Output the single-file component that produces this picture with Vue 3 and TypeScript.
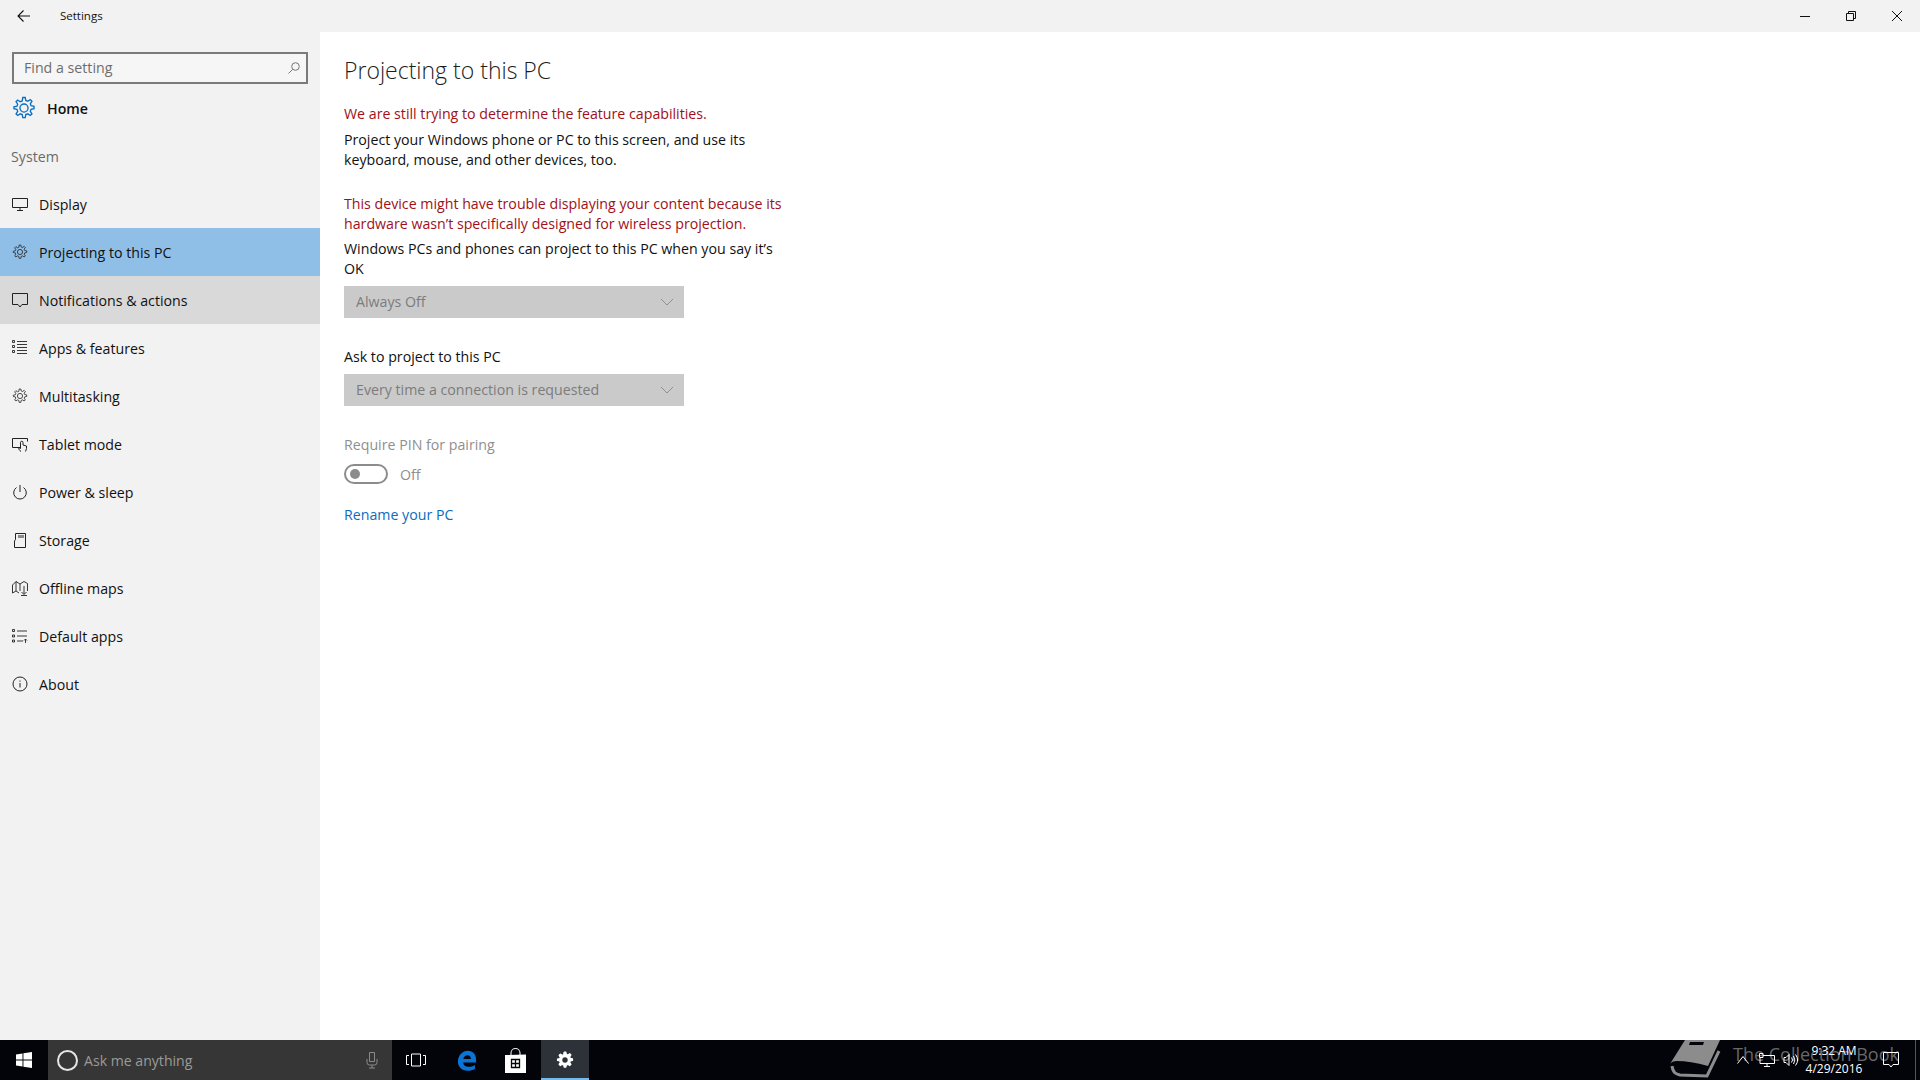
<script setup lang="ts">
interface NavItem { label: string; icon: string; state?: string }
const items: NavItem[] = [
  { label: 'Display', icon: 'display' },
  { label: 'Projecting to this PC', icon: 'gear', state: 'selected' },
  { label: 'Notifications & actions', icon: 'note', state: 'hover' },
  { label: 'Apps & features', icon: 'apps' },
  { label: 'Multitasking', icon: 'gear' },
  { label: 'Tablet mode', icon: 'tablet' },
  { label: 'Power & sleep', icon: 'power' },
  { label: 'Storage', icon: 'storage' },
  { label: 'Offline maps', icon: 'map' },
  { label: 'Default apps', icon: 'defaults' },
  { label: 'About', icon: 'about' },
]
const gear = 'M7.2 1h1.6l.4 2 1.3.5 1.7-1.1 1.1 1.1-1.1 1.7.5 1.3 2 .4v1.6l-2 .4-.5 1.3 1.1 1.7-1.1 1.1-1.7-1.1-1.3.5-.4 2H7.2l-.4-2-1.3-.5-1.7 1.1-1.1-1.1 1.1-1.7-.5-1.3-2-.4V7.200l2-.4.5-1.3-1.1-1.700 1.100-1.100 1.700 1.100 1.300-.5z'
</script>

<template>
  <div class="screen">
    <header class="titlebar">
      <div class="title-left">
        <svg class="back" width="16" height="16" viewBox="0 0 16 16"><path d="M14 8H2M7.500 2.500 2 8l5.500 5.500" fill="none" stroke="#111" stroke-width="1.100" /></svg>
        <span class="app-name">Settings</span>
      </div>
      <div class="win-buttons">
        <svg width="12" height="12" viewBox="0 0 12 12"><path d="M1 6.500h10" stroke="#111" fill="none" /></svg>
        <svg width="12" height="12" viewBox="0 0 12 12"><path d="M1.500 3.500h7v7h-7zM3.500 3.500v-2h7v7h-2" stroke="#111" fill="none" /></svg>
        <svg width="12" height="12" viewBox="0 0 12 12"><path d="M1 1l10 10M11 1 1 11" stroke="#111" fill="none" /></svg>
      </div>
    </header>

    <div class="body">
      <aside class="sidebar">
        <div class="search">
          <span>Find a setting</span>
          <svg width="14" height="14" viewBox="0 0 14 14"><circle cx="8.500" cy="5.500" r="3.800" fill="none" stroke="#777" /><path d="M5.700 8.300 1.500 12.500" stroke="#777" fill="none" /></svg>
        </div>
        <div class="home">
          <svg width="24" height="24" viewBox="0 0 16 16"><path :d="gear" fill="none" stroke="#0a6fc2" stroke-width=".9" /><circle cx="8" cy="8" r="2.700" fill="none" stroke="#0a6fc2" stroke-width=".9" /></svg>
          <span>Home</span>
        </div>
        <div class="group">System</div>
        <nav>
          <div v-for="item in items" :key="item.label" class="nav-row" :class="item.state">
            <svg class="nav-icon" width="16" height="16" viewBox="0 0 16 16" fill="none" stroke="#222" stroke-width="1">
              <template v-if="item.icon === 'display'"><path d="M.500 2.500h15v9H.500zM8 11.500v3M5 14.500h6" /></template>
              <template v-else-if="item.icon === 'gear'"><path :d="gear" stroke-width=".8" /><circle cx="8" cy="8" r="2.600" stroke-width=".8" /></template>
              <template v-else-if="item.icon === 'note'"><path d="M.500 1.500h15v11H10L8 15l-2-2.500H.500z" /></template>
              <template v-else-if="item.icon === 'apps'"><path d="M.500.500h2v2h-2zM.500 5.500h2v2h-2zM.500 10.500h2v2h-2zM5 1.500h10M5 4.500h10M5 7.500h10M5 10.500h10M5 13.500h10" stroke-width=".9" /></template>
              <template v-else-if="item.icon === 'tablet'"><path d="M8 11.500H.500v-9h15v3M9 15.500c-1.500-1-2.500-2.500-2.500-4l2 1V6.500a1.200 1.200 0 0 1 2.500 0V9l3.500 1v2.500l-1 3" /></template>
              <template v-else-if="item.icon === 'power'"><path d="M8 1v7M4.500 3.500a6.300 6.300 0 1 0 7 0" /></template>
              <template v-else-if="item.icon === 'storage'"><path d="M3.500 1.500h10v14h-11V9l1-1.500zM7 3v3M9 3v3M11 3v3" /></template>
              <template v-else-if="item.icon === 'map'"><path d="M.500 13V5L4 1.500 8 4l4-2.500 3.500 2V11M4 1.500V11M8 4v7M.500 13 4 11l3 2M12 6v8M9.500 12l2.500 2.500 2.500-2.500M9 15.500h6" stroke-width=".9" /></template>
              <template v-else-if="item.icon === 'defaults'"><path d="M.500 1.500h2v2h-2zM.500 7h2v2h-2zM.500 12h2v2h-2zM5 3h10M5 8h10M5 13h6M13.500 15v-4M12 12.500l1.500-1.500 1.500 1.500" stroke-width=".9" /></template>
              <template v-else><circle cx="8" cy="8" r="7" /><path d="M8 7v4.500M8 4.500v1.200" /></template>
            </svg>
            <span>{{ item.label }}</span>
          </div>
        </nav>
      </aside>

      <main class="content">
        <h1>Projecting to this PC</h1>
        <p class="red first">We are still trying to determine the feature capabilities.</p>
        <p class="para">Project your Windows phone or PC to this screen, and use its keyboard, mouse, and other devices, too.</p>
        <p class="red second">This device might have trouble displaying your content because its hardware wasn’t specifically designed for wireless projection.</p>
        <p class="para third">Windows PCs and phones can project to this PC when you say it’s OK</p>
        <div class="select tight">
          <span>Always Off</span>
          <svg width="14" height="8" viewBox="0 0 14 8"><path d="M1 1l6 6 6-6" fill="none" stroke="#8f8f8f" /></svg>
        </div>
        <p class="label">Ask to project to this PC</p>
        <div class="select tight">
          <span>Every time a connection is requested</span>
          <svg width="14" height="8" viewBox="0 0 14 8"><path d="M1 1l6 6 6-6" fill="none" stroke="#8f8f8f" /></svg>
        </div>
        <p class="pin">Require PIN for pairing</p>
        <div class="toggle-row">
          <div class="toggle"><i></i></div>
          <span>Off</span>
        </div>
        <a class="rename">Rename your PC</a>
      </main>
    </div>

    <footer class="taskbar">
      <div class="start">
        <svg width="16" height="16" viewBox="0 0 14 14"><path d="M0 2.100 5.700 1.300V6.600H0zM6.500 1.200 14 0V6.600H6.500zM0 7.400H5.700V12.700L0 11.900zM6.500 7.400H14V14L6.500 12.800z" fill="#fff" /></svg>
      </div>
      <div class="cortana">
        <i class="ring"></i>
        <span>Ask me anything</span>
        <svg class="mic" width="12" height="18" viewBox="0 0 12 18"><path d="M3.500 1.500h5v9h-5zM1 8v3.500A2.500 2.500 0 0 0 3.500 14h5a2.500 2.500 0 0 0 2.500-2.500V8M6 14v3M3 17h6" fill="none" stroke="#8a8a8a" /></svg>
      </div>
      <div class="tb-icon">
        <svg width="20" height="14" viewBox="0 0 20 14"><path d="M5.500 1h9v12h-9zM3 2.500H.500v9H3M17 2.500h2.500v9H17" fill="none" stroke="#fff" /></svg>
      </div>
      <div class="tb-icon edge">
        <svg width="20" height="21" viewBox="0 0 20 22"><path d="M19.500 13H6c.3 3 2.500 4.600 5.500 4.600 2.600 0 5-.7 6.800-2v4.200c-2 1.200-4.700 1.900-7.800 1.900C4.500 21.700.500 17.700.500 12.100.500 6 5 .800 11 .800c5.300 0 8.500 3.700 8.500 9.500zM14 9.400c0-2.200-1.100-4-3.400-4-2.200 0-4 1.600-4.500 4z" fill="#0a74d6" /></svg>
      </div>
      <div class="tb-icon">
        <svg width="21" height="25" viewBox="0 0 21 25"><path d="M6 8V5a4.500 4.500 0 0 1 9 0v3" fill="none" stroke="#ddd" stroke-width="1.200" /><path d="M0 7 21 6.500V25H0z" fill="#fff" /><path d="M6.500 11.500h8v8h-8zM10.500 11.500v8M6.500 15.500h8" fill="none" stroke="#02040a" stroke-width="1.300" /></svg>
      </div>
      <div class="tb-icon active">
        <svg width="18" height="18" viewBox="0 0 16 16"><path :d="gear" fill="#fff" stroke="#fff" stroke-width="1" stroke-linejoin="round" /><circle cx="8" cy="8" r="2.400" fill="#2d3238" /></svg>
      </div>
      <div class="tray">
        <div class="watermark">
          <svg width="52" height="40" viewBox="0 0 52 40">
            <path d="M15 0H50L38 26Q20 21 7 21Q2 21 0 24Z" fill="#8c8c8c" />
            <path d="M20 2H34L33 5H19Z" fill="#02040a" />
            <path d="M2 26C3 33 6 34 10 35L37 36L49 11" fill="none" stroke="#8c8c8c" stroke-width="3" />
          </svg>
          <span>The Collection Book</span>
        </div>
        <svg class="tray-a" width="12" height="8" viewBox="0 0 12 8"><path d="M.500 7.500l5.500-7 5.500 7" fill="none" stroke="#fff" /></svg>
        <svg class="tray-b" width="16" height="14" viewBox="0 0 16 14"><path d="M4 2.500h11.500v8H1V5M8 10.500v3M5 13.500h6M.500.500h3.500v4H.500z" fill="none" stroke="#fff" /></svg>
        <svg class="tray-c" width="16" height="12" viewBox="0 0 16 12"><path d="M1 3.500h2L6 .500v11l-3-3H1zM8.500 3.500a4 4 0 0 1 0 5M10.500 2a7 7 0 0 1 0 8M12.500.500a9 9 0 0 1 0 11" fill="none" stroke="#fff" /></svg>
        <div class="clock"><span>9:32 AM</span><span>4/29/2016</span></div>
        <svg class="tray-d" width="16" height="16" viewBox="0 0 16 16"><path d="M.500.500h15v12H10L8 15l-2-2.500H.500z" fill="none" stroke="#fff" /></svg>
        <i class="show-desktop"></i>
      </div>
    </footer>
  </div>
</template>

<style scoped>
.screen {
  width: 1920px;
  height: 1080px;
  display: flex;
  flex-direction: column;
  overflow: hidden;
  font-family: "Open Sans", "Noto Sans", sans-serif;
  color: #111;
  background: #fff;
}
.titlebar {
  height: 32px;
  flex: none;
  display: flex;
  justify-content: space-between;
  align-items: center;
  background: #f2f2f2;
}
.title-left { display: flex; align-items: center; padding-left: 16px; }
.app-name { margin-left: 28px; font-size: 11.500px; padding-bottom: 1px; }
.win-buttons { display: flex; gap: 34px; padding-right: 17px; }
.body { flex: 1; display: flex; min-height: 0; }
.sidebar { width: 320px; flex: none; background: #f2f2f2; padding-top: 20px; }
.search {
  margin: 0 12px;
  height: 32px;
  box-sizing: border-box;
  border: 2px solid #7a7a7a;
  display: flex;
  align-items: center;
  justify-content: space-between;
  padding: 0 5px 2px 10px;
  font-size: 14.200px;
  color: #6d6d6d;
  background: #f6f6f6;
}
.search svg { margin-top: 2px; }
.home { display: flex; align-items: center; gap: 11px; height: 48px; padding-left: 12px; font-size: 14.200px; font-weight: 600; }
.group { height: 48px; line-height: 50px; padding-left: 11px; font-size: 14.200px; color: #6a6a6a; }
.nav-row { height: 48px; display: flex; align-items: center; padding-left: 12px; font-size: 14.200px; }
.nav-icon { margin-right: 11px; flex: none; }
.selected { background: #8fbfe7; }
.hover { background: #d9d9d9; }
.content { flex: 1; padding: 0 0 0 24px; }
h1 { margin: 19px 0 0; font-size: 23px; line-height: 38px; font-weight: 300; color: #1c1c1c; }
p { margin: 0; width: 445px; font-size: 14.200px; line-height: 20px; }
.red { color: #a01018; }
.first { margin-top: 15px; }
.para { margin-top: 6px; }
.second { margin-top: 24px; }
.third { margin-top: 5px; }
.select {
  width: 340px;
  height: 32px;
  padding: 0 10px 2px 12px;
  box-sizing: border-box;
  background: #cacaca;
  display: flex;
  align-items: center;
  justify-content: space-between;
  font-size: 14.200px;
  color: #7c7c7c;
}
.select svg { margin-top: 2px; }
.tight { margin-top: 7px; }
.label { margin-top: 29px; }
.pin { margin-top: 29px; color: #8f8f8f; }
.toggle-row { margin-top: 9px; display: flex; align-items: center; gap: 12px; font-size: 14.200px; color: #8f8f8f; }
.toggle { width: 44px; height: 20px; box-sizing: border-box; border: 2px solid #8c8c8c; border-radius: 10px; display: flex; align-items: center; padding-left: 4px; }
.toggle i { width: 10px; height: 10px; border-radius: 50%; background: #8c8c8c; }
.rename { display: block; margin-top: 21px; line-height: 20px; font-size: 14.200px; color: #0a6cbe; }
.taskbar { height: 40px; flex: none; display: flex; background: #02040a; color: #fff; }
.start { width: 48px; flex: none; display: flex; align-items: center; justify-content: center; }
.cortana { width: 344px; flex: none; background: #363636; display: flex; align-items: center; font-size: 14.100px; color: #9a9a9a; padding-left: 9px; box-sizing: border-box; }
.ring { width: 21px; height: 21px; box-sizing: border-box; border: 2.500px solid #e6e6e6; border-radius: 50%; margin-right: 6px; }
.mic { margin-left: auto; margin-right: 14px; }
.tb-icon { width: 48px; flex: none; display: flex; align-items: center; justify-content: center; box-sizing: border-box; }
.tb-icon.edge { margin-left: 3px; }
.tb-icon.active { background: #2d3238; border-bottom: 2px solid #76b9ed; margin-left: 2px; padding-top: 2px; }
.tray { flex: 1; position: relative; display: flex; align-items: center; justify-content: flex-end; padding-right: 4px; overflow: hidden; }
.watermark { position: absolute; left: 1081px; top: 0; display: flex; gap: 11px; font-size: 18px; color: #686868; white-space: nowrap; }
.watermark span { margin-top: 2px; }
.tray-a { margin-right: 10px; position: relative; }
.tray-b { margin-right: 8px; position: relative; }
.tray-c { margin-right: 5px; position: relative; }
.clock { position: relative; width: 60px; margin-right: 19px; display: flex; flex-direction: column; align-items: center; font-size: 12px; line-height: 18px; white-space: nowrap; }
.tray-d { margin-right: 16px; position: relative; }
.show-desktop { width: 1px; height: 40px; background: #555; }
</style>
